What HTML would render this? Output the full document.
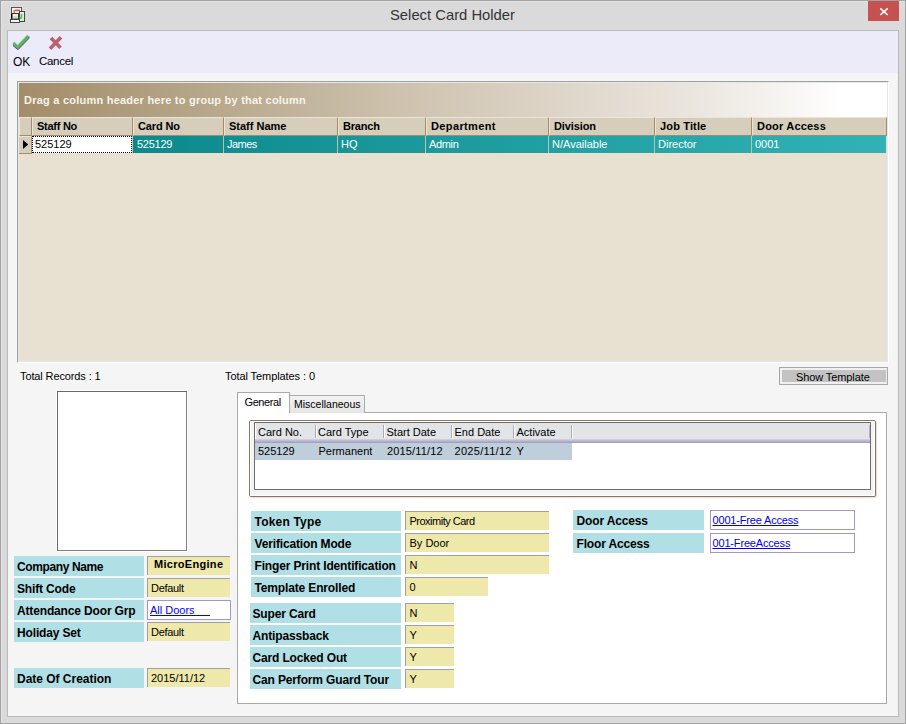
<!DOCTYPE html>
<html><head><meta charset="utf-8">
<style>
*{margin:0;padding:0;box-sizing:border-box}
html,body{width:906px;height:724px;overflow:hidden;background:#dadada;font-family:"Liberation Sans",sans-serif;color:#000}
.a{position:absolute}
.t{position:absolute;white-space:pre;line-height:1}
#frame{left:0;top:0;width:906px;height:724px;border:1px solid #a3a3a3}
#frame2{left:1px;top:1px;width:904px;height:722px;border:1px solid #e4e4e4;border-right:none;border-bottom:none}
#client{left:7px;top:30px;width:892px;height:687px;border:1px solid #b9b9b9;background:#f5f5f5}
#toolbar{left:8px;top:31px;width:890px;height:42px;background:#ebebfa}
/* grid */
#gridbox{left:17px;top:81px;width:872px;height:282px;border-top:1px solid #a0a0a0;border-left:1px solid #a0a0a0;border-right:1px solid #fff;border-bottom:1px solid #fff}
#gridin{left:18px;top:82px;width:870px;height:280px;border-top:1px solid #e3e8ec;border-left:1px solid #e3e8ec;border-right:1px solid #e3e8ec;border-bottom:1px solid #e3e8ec;background:#e8e0d0}
#grp{left:19px;top:83px;width:868px;height:34px;background:linear-gradient(to right,#a38d69 0px,#b5a689 181px,#cec2ae 381px,#ebe6df 681px,#fff 824px,#fff 868px)}
.hd{position:absolute;top:117px;height:19px;background:#d6cdbb;border-top:1px solid #ebe4d8;border-left:1px solid #ebe4d8;border-right:1px solid #a38d69;border-bottom:1px solid #a38d69}
.hdt{position:absolute;top:121px;font-size:11px;font-weight:bold;white-space:pre;line-height:1}
#row{left:133px;top:136px;width:753px;height:17px;background:linear-gradient(to right,#0c898c,#32b2b6)}
.rs{position:absolute;top:136px;width:1px;height:17px;background:#cdc5b4;opacity:.9}
.rt{position:absolute;top:139px;font-size:11px;color:#fff;white-space:pre;line-height:1}
/* fields */
.lb{position:absolute;height:20px;background:#b0dfe5}
.lbt{position:absolute;font-size:12px;font-weight:bold;white-space:pre;line-height:1}
.vb{position:absolute;height:19px;background:#eee8aa;border-top:1px solid #a0a0a0;border-left:1px solid #a0a0a0}
.vbt{position:absolute;font-size:11px;white-space:pre;line-height:1}
.lk{position:absolute;height:20px;background:#fff;border:1px solid #9d98c8}
.lkt{position:absolute;font-size:11px;color:#0000ff;text-decoration:underline;white-space:pre;line-height:1}
</style></head>
<body>
<div id="frame" class="a"></div>
<div id="frame2" class="a"></div>

<!-- title -->
<div class="t" style="left:390px;top:8px;font-size:14.8px;color:#333">Select Card Holder</div>
<div class="a" style="left:868px;top:1px;width:31px;height:20px;background:#c75050"></div>
<svg class="a" style="left:879px;top:7px" width="10" height="9" viewBox="0 0 10 9"><path d="M1.3 1.3 L8.7 8 M8.7 1.3 L1.3 8" stroke="#fff" stroke-width="1.6"/></svg>

<div id="client" class="a"></div>
<div id="toolbar" class="a"></div>

<div id="gridbox" class="a"></div>
<div id="gridin" class="a"></div>
<div id="grp" class="a"></div>
<div class="t" style="left:24px;top:95px;font-size:11px;font-weight:bold;letter-spacing:0.23px;color:#f7f3ec">Drag a column header here to group by that column</div>
<div class="hd" style="left:19px;width:13px"></div>
<div class="hd" style="left:32px;width:101px"></div>
<div class="hdt" style="left:37px;letter-spacing:-0.26px">Staff No</div>
<div class="hd" style="left:133px;width:91px"></div>
<div class="hdt" style="left:138px;letter-spacing:-0.13px">Card No</div>
<div class="hd" style="left:224px;width:114px"></div>
<div class="hdt" style="left:229px">Staff Name</div>
<div class="hd" style="left:338px;width:88px"></div>
<div class="hdt" style="left:343px;letter-spacing:-0.2px">Branch</div>
<div class="hd" style="left:426px;width:123px"></div>
<div class="hdt" style="left:431px;letter-spacing:0.37px">Department</div>
<div class="hd" style="left:549px;width:106px"></div>
<div class="hdt" style="left:554px;letter-spacing:-0.1px">Division</div>
<div class="hd" style="left:655px;width:97px"></div>
<div class="hdt" style="left:660px;letter-spacing:0.15px">Job Title</div>
<div class="hd" style="left:752px;width:135px"></div>
<div class="hdt" style="left:757px;letter-spacing:0.19px">Door Access</div>
<div class="a" style="left:19px;top:136px;width:13px;height:18px;background:#d6cdbb;border-top:1px solid #ebe4d8;border-right:1px solid #a38d69;border-bottom:1px solid #a38d69"></div>
<svg class="a" style="left:22px;top:139px" width="8" height="11" viewBox="0 0 8 11"><path d="M1 1 L6.2 5.5 L1 10 Z" fill="#000"/></svg>
<div id="row" class="a"></div>
<div class="a" style="left:32px;top:136px;width:100px;height:17px;background:#fff;border:1px dotted #000"></div>
<div class="rt" style="left:35px;color:#000">525129</div>
<div class="rs" style="left:132px"></div>
<div class="rt" style="left:137px;color:#fff;letter-spacing:-0.25px">525129</div>
<div class="rs" style="left:223px"></div>
<div class="rt" style="left:227px;color:#fff;letter-spacing:-0.55px">James</div>
<div class="rs" style="left:337px"></div>
<div class="rt" style="left:341px;color:#fff">HQ</div>
<div class="rs" style="left:425px"></div>
<div class="rt" style="left:429px;color:#fff;letter-spacing:-0.35px">Admin</div>
<div class="rs" style="left:548px"></div>
<div class="rt" style="left:552px;color:#fff">N/Available</div>
<div class="rs" style="left:654px"></div>
<div class="rt" style="left:658px;color:#fff">Director</div>
<div class="rs" style="left:751px"></div>
<div class="rt" style="left:755px;color:#fff">0001</div>
<svg class="a" style="left:0;top:0" width="906" height="60" viewBox="0 0 906 60">
<polygon points="14.4,41.9 17.5,45.3 27.4,34.9 29.2,36.7 28.8,38.5 18,49.7 12.9,45.5 12.9,43" fill="#5fb05f"/>
<path d="M12.9,45.5 L18,49.7 L28.8,38.5 L29.2,36.7" fill="none" stroke="#5353b0" stroke-width="1"/>
<path d="M14.4,41.9 L17.5,45.3 L27.4,34.9" fill="none" stroke="#74d574" stroke-width="0.8"/>
<path d="M51,38 L60.5,47.8 M61,37.2 L50,48.7" fill="none" stroke="#b8636c" stroke-width="3.6"/>
<g>
<rect x="11.5" y="7.5" width="10" height="9" fill="#f2f2f2" stroke="#555" stroke-width="1"/>
<rect x="13.5" y="10" width="1.5" height="4" fill="#e08020"/>
<rect x="15" y="9.6" width="5" height="1.6" fill="#e05050"/>
<rect x="19.5" y="11.5" width="5" height="10" fill="#e8e4ea" stroke="#444" stroke-width="1"/>
<path d="M21.5,14 L21.5,18 L19.5,18" fill="none" stroke="#22dd22" stroke-width="1.4"/>
<rect x="11.5" y="13.5" width="7" height="5.5" fill="#f0f0f0" stroke="#3a3a3a" stroke-width="1"/>
<rect x="11" y="14" width="1.5" height="4.5" fill="#000"/>
<rect x="13.5" y="16" width="4" height="2" fill="#d8d8d8"/>
<rect x="10.5" y="19.5" width="9" height="3" fill="#f4f4f4" stroke="#444" stroke-width="1"/>
</g>
</svg>

<div class="t" style="left:13px;top:55.84px;font-size:12px;">OK</div>
<div class="t" style="left:39px;top:56.27px;font-size:11.5px;letter-spacing:-0.3px">Cancel</div>
<div class="t" style="left:20px;top:370.69px;font-size:11px;letter-spacing:-0.12px">Total Records : 1</div>
<div class="t" style="left:225px;top:370.69px;font-size:11px;letter-spacing:-0.08px">Total Templates : 0</div>
<div class="a" style="left:779px;top:367px;width:109px;height:18px;border:1px solid #a7a7a7;background:#f0f0f0"></div>
<div class="a" style="left:782px;top:370px;width:104px;height:12px;background:#c3c3c3"></div>
<div class="t" style="left:796px;top:371.69px;font-size:11px;letter-spacing:-0.1px">Show Template</div>
<div class="a" style="left:56px;top:390px;width:132px;height:162px;border:1px solid #fff"></div>
<div class="a" style="left:57px;top:391px;width:130px;height:160px;border:1px solid #6a6a6a;border-right-color:#808080;border-bottom-color:#808080;background:#fff"></div>
<div class="lb" style="left:14px;top:556px;width:130px"></div>
<div class="t" style="left:17px;top:560.84px;font-size:12px;font-weight:bold;letter-spacing:-0.38px">Company Name</div>
<div class="vb" style="left:147px;top:556px;width:83px"></div>
<div class="t" style="left:154px;top:558.69px;font-size:11px;font-weight:bold;letter-spacing:0.3px">MicroEngine</div>
<div class="lb" style="left:14px;top:578px;width:130px"></div>
<div class="t" style="left:17px;top:582.84px;font-size:12px;font-weight:bold;letter-spacing:-0.15px">Shift Code</div>
<div class="vb" style="left:147px;top:578px;width:83px"></div>
<div class="t" style="left:151px;top:583.39px;font-size:11px;letter-spacing:-0.3px">Default</div>
<div class="lb" style="left:14px;top:600px;width:130px"></div>
<div class="t" style="left:17px;top:604.84px;font-size:12px;font-weight:bold;letter-spacing:-0.15px">Attendance Door Grp</div>
<div class="lk" style="left:147px;top:600px;width:84px"></div>
<div class="t" style="left:150px;top:604.69px;font-size:11px;color:#0000ff;text-decoration:underline">All Doors     </div>
<div class="lb" style="left:14px;top:622px;width:130px"></div>
<div class="t" style="left:17px;top:626.84px;font-size:12px;font-weight:bold;letter-spacing:-0.15px">Holiday Set</div>
<div class="vb" style="left:147px;top:622px;width:83px"></div>
<div class="t" style="left:151px;top:627.39px;font-size:11px;letter-spacing:-0.3px">Default</div>
<div class="lb" style="left:14px;top:668px;width:130px"></div>
<div class="t" style="left:17px;top:672.84px;font-size:12px;font-weight:bold;letter-spacing:-0.02px">Date Of Creation</div>
<div class="vb" style="left:147px;top:668px;width:83px"></div>
<div class="t" style="left:151px;top:673.39px;font-size:11px;">2015/11/12</div>
<div class="a" style="left:237px;top:412px;width:650px;height:292px;border:1px solid #a9a9a9;background:#fff"></div>
<div class="a" style="left:289px;top:395px;width:76px;height:18px;border:1px solid #acacac;border-bottom:none;background:linear-gradient(#f2f2f2,#e5e5e5)"></div>
<div class="a" style="left:237px;top:392px;width:53px;height:21px;border:1px solid #a9a9a9;border-bottom:none;background:#fff"></div>
<div class="t" style="left:244.5px;top:396.69px;font-size:11px;letter-spacing:-0.4px">General</div>
<div class="t" style="left:294px;top:398.61px;font-size:10.5px;">Miscellaneous</div>
<div class="a" style="left:249px;top:420px;width:627px;height:77px;border:1px solid #8c7462;border-radius:2px;background:#f4f4f4;box-shadow:1px 1px 1px rgba(140,116,98,.25)"></div>
<div class="a" style="left:250px;top:421px;width:625px;height:75px;border:1px solid #fff;border-radius:1px"></div>
<div class="a" style="left:254px;top:422px;width:617px;height:68px;border:1px solid #6d6d6d;background:#fff"></div>
<div class="a" style="left:255px;top:423px;width:615px;height:16px;background:#e3e4e6"></div>
<div class="a" style="left:255px;top:423px;width:1px;height:16px;background:#fff"></div>
<div class="a" style="left:869px;top:425px;width:1px;height:13px;background:#b8b5d0"></div>
<div class="a" style="left:255px;top:439px;width:615px;height:4px;background:linear-gradient(#d6d3e2,#9c99b8)"></div>
<div class="a" style="left:255px;top:443px;width:317px;height:17px;background:#bfcedb"></div>
<div class="a" style="left:315px;top:425px;width:1px;height:13px;background:#aba8c4"></div>
<div class="a" style="left:316px;top:425px;width:1px;height:13px;background:#fff"></div>
<div class="a" style="left:383px;top:425px;width:1px;height:13px;background:#aba8c4"></div>
<div class="a" style="left:384px;top:425px;width:1px;height:13px;background:#fff"></div>
<div class="a" style="left:451px;top:425px;width:1px;height:13px;background:#aba8c4"></div>
<div class="a" style="left:452px;top:425px;width:1px;height:13px;background:#fff"></div>
<div class="a" style="left:513px;top:425px;width:1px;height:13px;background:#aba8c4"></div>
<div class="a" style="left:514px;top:425px;width:1px;height:13px;background:#fff"></div>
<div class="a" style="left:571px;top:425px;width:1px;height:13px;background:#aba8c4"></div>
<div class="a" style="left:572px;top:425px;width:1px;height:13px;background:#fff"></div>
<div class="t" style="left:258px;top:426.69px;font-size:11px;">Card No.</div>
<div class="t" style="left:318px;top:426.69px;font-size:11px;">Card Type</div>
<div class="t" style="left:386.5px;top:426.69px;font-size:11px;">Start Date</div>
<div class="t" style="left:454.5px;top:426.69px;font-size:11px;">End Date</div>
<div class="t" style="left:516.5px;top:426.69px;font-size:11px;">Activate</div>
<div class="t" style="left:258px;top:445.69px;font-size:11px;">525129</div>
<div class="t" style="left:318.5px;top:445.69px;font-size:11px;">Permanent</div>
<div class="t" style="left:387px;top:445.69px;font-size:11px;letter-spacing:0.15px">2015/11/12</div>
<div class="t" style="left:454.5px;top:445.69px;font-size:11px;letter-spacing:0.3px">2025/11/12</div>
<div class="t" style="left:516.5px;top:445.69px;font-size:11px;">Y</div>
<div class="lb" style="left:251px;top:511px;width:150px"></div>
<div class="t" style="left:254.5px;top:515.84px;font-size:12px;font-weight:bold;letter-spacing:0.2px">Token Type</div>
<div class="vb" style="left:405px;top:511px;width:144px"></div>
<div class="t" style="left:409.5px;top:516.39px;font-size:11px;letter-spacing:-0.5px">Proximity Card</div>
<div class="lb" style="left:251px;top:533px;width:150px"></div>
<div class="t" style="left:254.5px;top:537.84px;font-size:12px;font-weight:bold;letter-spacing:-0.15px">Verification Mode</div>
<div class="vb" style="left:405px;top:533px;width:144px"></div>
<div class="t" style="left:409.5px;top:538.39px;font-size:11px;">By Door</div>
<div class="lb" style="left:251px;top:555px;width:150px"></div>
<div class="t" style="left:254.5px;top:559.84px;font-size:12px;font-weight:bold;letter-spacing:-0.15px">Finger Print Identification</div>
<div class="vb" style="left:405px;top:555px;width:144px"></div>
<div class="t" style="left:409.5px;top:560.39px;font-size:11px;">N</div>
<div class="lb" style="left:251px;top:577px;width:150px"></div>
<div class="t" style="left:254.5px;top:581.84px;font-size:12px;font-weight:bold;letter-spacing:-0.15px">Template Enrolled</div>
<div class="vb" style="left:405px;top:577px;width:83px"></div>
<div class="t" style="left:409.5px;top:582.39px;font-size:11px;">0</div>
<div class="lb" style="left:250px;top:603px;width:151px"></div>
<div class="t" style="left:252.5px;top:607.84px;font-size:12px;font-weight:bold;letter-spacing:-0.15px">Super Card</div>
<div class="vb" style="left:405px;top:603px;width:49px"></div>
<div class="t" style="left:409.5px;top:608.39px;font-size:11px;">N</div>
<div class="lb" style="left:250px;top:625px;width:151px"></div>
<div class="t" style="left:252.5px;top:629.84px;font-size:12px;font-weight:bold;letter-spacing:-0.15px">Antipassback</div>
<div class="vb" style="left:405px;top:625px;width:49px"></div>
<div class="t" style="left:409.5px;top:630.39px;font-size:11px;">Y</div>
<div class="lb" style="left:250px;top:647px;width:151px"></div>
<div class="t" style="left:252.5px;top:651.84px;font-size:12px;font-weight:bold;letter-spacing:-0.15px">Card Locked Out</div>
<div class="vb" style="left:405px;top:647px;width:49px"></div>
<div class="t" style="left:409.5px;top:652.39px;font-size:11px;">Y</div>
<div class="lb" style="left:250px;top:669px;width:151px"></div>
<div class="t" style="left:252.5px;top:673.84px;font-size:12px;font-weight:bold;letter-spacing:-0.15px">Can Perform Guard Tour</div>
<div class="vb" style="left:405px;top:669px;width:49px"></div>
<div class="t" style="left:409.5px;top:674.39px;font-size:11px;">Y</div>
<div class="lb" style="left:573px;top:510px;width:131px"></div>
<div class="t" style="left:576.5px;top:515.1px;font-size:12px;font-weight:bold;letter-spacing:-0.15px">Door Access</div>
<div class="lk" style="left:710px;top:510px;width:145px"></div>
<div class="t" style="left:712.5px;top:515.1px;font-size:11px;color:#0000ee;text-decoration:underline;letter-spacing:-0.17px">0001-Free Access</div>
<div class="lb" style="left:573px;top:533px;width:131px"></div>
<div class="t" style="left:576.5px;top:538.1px;font-size:12px;font-weight:bold;letter-spacing:-0.15px">Floor Access</div>
<div class="lk" style="left:710px;top:533px;width:145px"></div>
<div class="t" style="left:712.5px;top:538.1px;font-size:11px;color:#0000ee;text-decoration:underline;letter-spacing:-0.17px">001-FreeAccess</div>
</body></html>
